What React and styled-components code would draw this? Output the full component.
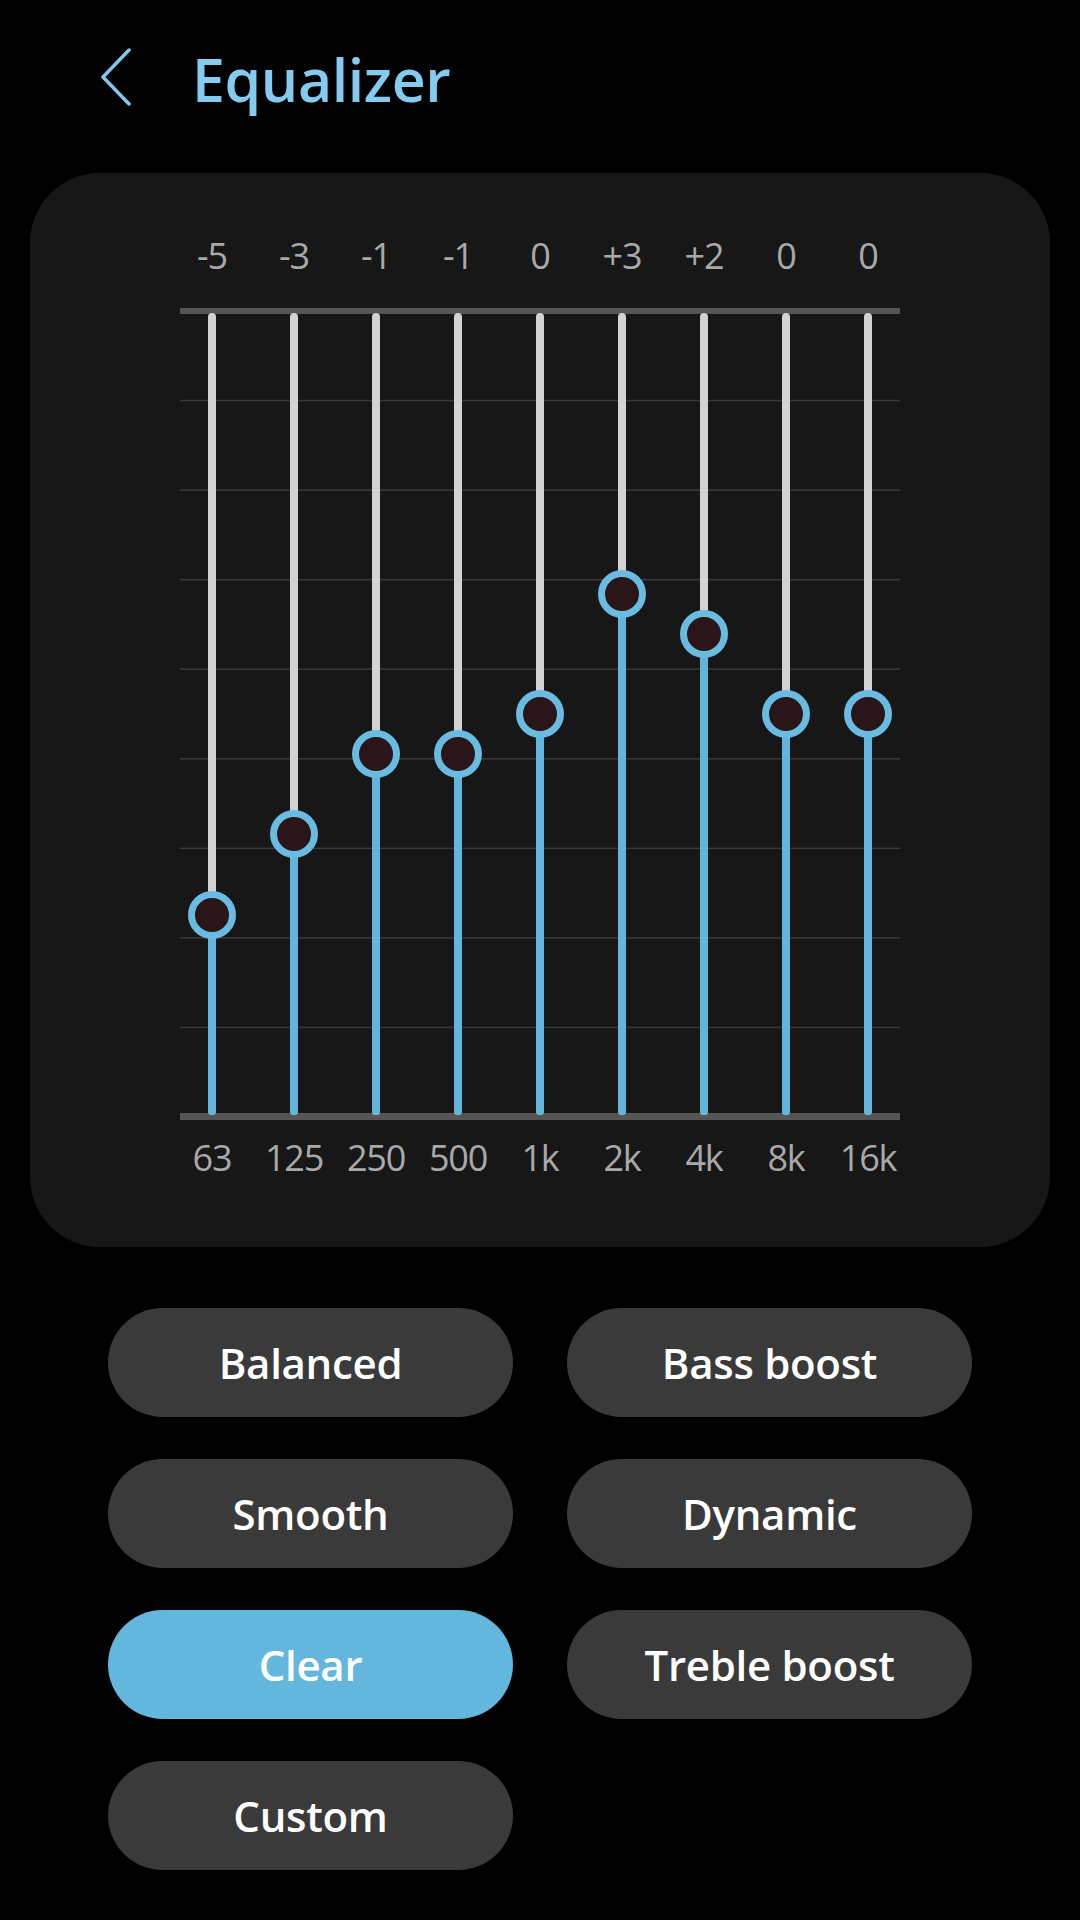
import React from 'react';
import styled, { createGlobalStyle } from 'styled-components';

const Global = createGlobalStyle`
  html, body { margin: 0; padding: 0; background: #000; }
  body { font-family: "Open Sans", "Noto Sans", sans-serif; }
  #root { width: 1080px; min-height: 1920px; background: #000; }
`;

const Page = styled.div`
  width: 1080px;
  min-height: 1920px;
  background: #000;
  display: flex;
  flex-direction: column;
`;

const Header = styled.header`
  height: 154px;
  display: flex;
  align-items: center;
  padding-left: 101px;
  gap: 61px;
`;

const BackButton = styled.button`
  background: none;
  border: 0;
  padding: 0;
  width: 30px;
  height: 58px;
  display: flex;
  align-items: center;
  cursor: pointer;
`;

const Title = styled.h1`
  margin: 0;
  padding-top: 4px;
  font-size: 59px;
  line-height: 1;
  font-weight: 600;
  color: #84ccef;
  letter-spacing: -0.4px;
`;

const Card = styled.section`
  margin: 19px 30px 0;
  padding: 58px 0 64px;
  background: #171717;
  border-radius: 70px;
`;

const LabelRow = styled.div`
  display: grid;
  grid-template-columns: repeat(9, 82px);
  margin-left: 141px;
  margin-top: ${p => p.$top || 0}px;
`;

const Label = styled.span`
  text-align: center;
  font-size: 36px;
  line-height: 50px;
  color: #a9a9a9;
  letter-spacing: -1.2px;
`;

const Chart = styled.div`
  position: relative;
  width: 720px;
  height: 812px;
  margin: 27px 0 0 150px;
`;

const GridSvg = styled.svg`
  position: absolute;
  inset: 0;
`;

const Sliders = styled.div`
  position: relative;
  display: grid;
  grid-template-columns: repeat(9, 82px);
  margin: 0 -9px;
  height: 100%;
`;

const Slot = styled.div`
  position: relative;
  padding: 5px 0;
  display: flex;
  justify-content: center;
`;

const Track = styled.div`
  width: 8px;
  height: 100%;
  border-radius: 4px;
  background: #d2d2d2;
  overflow: hidden;
  display: flex;
  flex-direction: column;
  justify-content: flex-end;
`;

const Fill = styled.div`
  width: 100%;
  background: #62b6dd;
`;

const Thumb = styled.div`
  position: absolute;
  left: 50%;
  width: 34px;
  height: 34px;
  margin: -24px 0 0 -24px;
  border: 7px solid #68bbe1;
  border-radius: 50%;
  background: #2a1619;
`;

const Presets = styled.div`
  display: grid;
  grid-template-columns: 405px 405px;
  column-gap: 54px;
  row-gap: 42px;
  margin-top: 61px;
  padding-left: 108px;
`;

const Preset = styled.button`
  height: 109px;
  border: 0;
  border-radius: 55px;
  background: ${p => (p.$active ? '#63b7dd' : '#3a3a3a')};
  color: #fff;
  font-family: "Open Sans", "Noto Sans", sans-serif;
  font-size: 42px;
  font-weight: 600;
  letter-spacing: -0.3px;
  cursor: pointer;
`;

const bands = [
  { f: '63', v: -5, t: '-5' },
  { f: '125', v: -3, t: '-3' },
  { f: '250', v: -1, t: '-1' },
  { f: '500', v: -1, t: '-1' },
  { f: '1k', v: 0, t: '0' },
  { f: '2k', v: 3, t: '+3' },
  { f: '4k', v: 2, t: '+2' },
  { f: '8k', v: 0, t: '0' },
  { f: '16k', v: 0, t: '0' },
];

const presets = ['Balanced', 'Bass boost', 'Smooth', 'Dynamic', 'Clear', 'Treble boost', 'Custom'];

const TRACK = 802; // inner track height
const UNIT = 40.1;

function Slider({ value }) {
  const center = TRACK / 2 - value * UNIT;
  return (
    <Slot>
      <Track>
        <Fill style={{ height: TRACK - center }} />
      </Track>
      <Thumb style={{ top: 5 + center }} />
    </Slot>
  );
}

export default function App() {
  const lines = [];
  for (let k = 1; k <= 8; k++) lines.push(3 + k * (806 / 9));
  return (
    <Page>
      <Global />
      <Header>
        <BackButton aria-label="Back">
          <svg width="30" height="58" viewBox="0 0 30 58">
            <path d="M28 2 L2 29 L28 56" fill="none" stroke="#7ec8eb" strokeWidth="3.5" strokeLinecap="round" strokeLinejoin="round" />
          </svg>
        </BackButton>
        <Title>Equalizer</Title>
      </Header>
      <Card>
        <LabelRow>
          {bands.map((b, i) => (
            <Label key={i}>{b.t}</Label>
          ))}
        </LabelRow>
        <Chart>
          <GridSvg width="720" height="812" viewBox="0 0 720 812">
            {lines.map((y, i) => (
              <rect key={i} x="0" y={y - 0.75} width="720" height="1.5" fill="#3a3a3a" />
            ))}
            <rect x="0" y="0" width="720" height="6" fill="#555555" />
            <rect x="0" y="805" width="720" height="7" fill="#555555" />
          </GridSvg>
          <Sliders>
            {bands.map((b, i) => (
              <Slider key={i} value={b.v} />
            ))}
          </Sliders>
        </Chart>
        <LabelRow $top={13}>
          {bands.map((b, i) => (
            <Label key={i}>{b.f}</Label>
          ))}
        </LabelRow>
      </Card>
      <Presets>
        {presets.map(p => (
          <Preset key={p} $active={p === 'Clear'}>{p}</Preset>
        ))}
      </Presets>
    </Page>
  );
}
